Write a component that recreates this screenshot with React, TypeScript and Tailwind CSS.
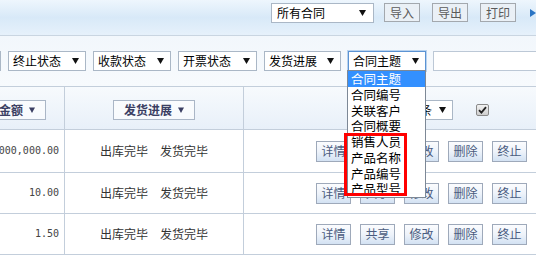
import React from "react";

const FONT = "font-['Noto_Sans_CJK_SC','Liberation_Sans',sans-serif]";

function Arrow() {
  return (
    <svg width="7" height="6" viewBox="0 0 7 6" className="shrink-0">
      <path d="M0 0 H7 L3.5 6 Z" fill="#111" />
    </svg>
  );
}

function Sel({ label, className, focus }: { label: string; className: string; focus?: boolean }) {
  return (
    <div
      className={
        "flex items-center justify-between h-[20px] bg-white pl-[4px] pr-[6px] shrink-0 text-[12px] leading-[14px] text-black border " +
        (focus ? "border-[#5b93d3] shadow-[0_0_0_1px_#b9d3ef] " : "border-[#aab7c6] ") +
        className
      }
    >
      <span className="whitespace-nowrap">{label}</span>
      <Arrow />
    </div>
  );
}

function TopBtn({ label }: { label: string }) {
  return (
    <div className="w-[36px] h-[19px] flex items-center justify-center border border-[#a3a8ae] bg-[#eaf0f6] text-[12px] leading-[14px] text-[#5a5a5a] shrink-0">
      {label}
    </div>
  );
}

function RowBtn({ label }: { label: string }) {
  return (
    <div className="w-[35px] h-[21px] flex items-center justify-center border border-[#9ea9ba] bg-gradient-to-b from-[#fbfcfe] via-[#eef3fa] to-[#d3e2f3] text-[12px] leading-[14px] text-[#4a5c80] shrink-0">
      {label}
    </div>
  );
}

function HeadBtn({ label }: { label: string }) {
  return (
    <div className="h-[20px] flex items-center gap-[6px] border border-[#aab6c6] bg-white/60 px-[10px] text-[12px] leading-[14px] font-bold text-[#3b3f63] shrink-0 whitespace-nowrap">
      <span>{label}</span>
      <svg width="6" height="6" viewBox="0 0 6 6">
        <path d="M0 0.5 H6 L3 6 Z" fill="#3b3f63" />
      </svg>
    </div>
  );
}

const rows = [
  { amt: "1,000,000.00", h: "h-[43px]" },
  { amt: "10.00", h: "h-[41px]" },
  { amt: "1.50", h: "h-[41px]" },
];

const items = ["合同主题", "合同编号", "关联客户", "合同概要", "销售人员", "产品名称", "产品编号", "产品型号"];

export default function App() {
  return (
    <div className={"relative w-[536px] h-[260px] overflow-hidden bg-white " + FONT}>
      {/* top bar */}
      <div className="h-[36px] border-b border-[#c9d5e1] bg-gradient-to-b from-[#eef6fd] via-[#d8e9f8] to-[#e6f1fb] flex items-start pt-[3px] pl-[271px]">
        <Sel label="所有合同" className="w-[103px] pl-[5px] pr-[7px]" />
        <div className="ml-[10px] flex gap-[12px]">
          <TopBtn label="导入" />
          <TopBtn label="导出" />
          <TopBtn label="打印" />
        </div>
        <svg width="6" height="8" viewBox="0 0 6 8" className="ml-[14px] mt-[6px]">
          <path d="M0 0 L6 4 L0 8 Z" fill="#2a74c4" />
        </svg>
      </div>

      {/* filter row */}
      <div className="h-[50px] bg-gradient-to-b from-[#f2f7fc] to-[#f7fafd] flex items-start pt-[15px]">
        <div className="flex gap-[7px] ml-[-77px]">
          <Sel label="合同状态" className="w-[78px]" />
          <Sel label="终止状态" className="w-[78px]" />
          <Sel label="收款状态" className="w-[78px]" />
          <Sel label="开票状态" className="w-[79px]" />
          <Sel label="发货进展" className="w-[77px]" />
          <Sel label="合同主题" className="w-[78px]" focus />
          <div className="w-[120px] h-[20px] bg-white border border-[#bcc8d6] shrink-0" />
        </div>
      </div>

      {/* table */}
      <div className="border-t border-[#c3cedb]">
        <div className="grid grid-cols-[65px_179px_1fr] h-[43px] border-b border-[#c3cedb] bg-gradient-to-b from-[#f7fafd] to-[#e8f0f9]">
          <div className="border-r border-[#c3cedb] flex items-center justify-end pr-[18px] pt-[4px] overflow-hidden">
            <HeadBtn label="合同金额" />
          </div>
          <div className="border-r border-[#c3cedb] flex items-center justify-center pt-[4px]">
            <HeadBtn label="发货进展" />
          </div>
          <div className="flex items-center justify-end pr-[47px] pt-[4px]">
            <Sel label="每页显示条" className="w-[86px]" />
            <div className="ml-[23px] w-[13px] h-[12px] rounded-[2px] border border-[#8a8a8a] bg-gradient-to-b from-[#f2f2f2] to-[#cfcfcf] flex items-center justify-center">
              <svg width="9" height="8" viewBox="0 0 9 8">
                <path d="M1 4.2 L3.4 6.6 L8 1.2" fill="none" stroke="#222" strokeWidth="1.8" />
              </svg>
            </div>
          </div>
        </div>
        {rows.map((r, i) => (
          <div key={i} className={"grid grid-cols-[65px_179px_1fr] border-b border-[#c3cedb] " + r.h}>
            <div className="border-r border-[#c3cedb] flex items-center justify-end pr-[5px] overflow-hidden">
              <span className="font-['DejaVu_Sans_Mono',monospace] text-[10px] leading-[12px] text-[#444] whitespace-nowrap">{r.amt}</span>
            </div>
            <div className="border-r border-[#c3cedb] flex items-center justify-center text-[12px] leading-[14px] text-[#333] whitespace-pre">
              出库完毕　发货完毕
            </div>
            <div className="flex items-center justify-end pr-[9px] gap-[9px]">
              <RowBtn label="详情" />
              <RowBtn label="共享" />
              <RowBtn label="修改" />
              <RowBtn label="删除" />
              <RowBtn label="终止" />
            </div>
          </div>
        ))}
      </div>

      {/* dropdown list */}
      <div className="absolute left-[347px] top-[70px] w-[79px] border border-[#7d8896] bg-white">
        {items.map((t, i) => (
          <div
            key={t}
            className={
              "h-[15.75px] pl-[3px] text-[12.5px] leading-[15.75px] whitespace-nowrap " +
              (i === 0 ? "bg-[#3390ff] text-white" : "text-black")
            }
          >
            {t}
          </div>
        ))}
      </div>

      {/* red annotation box */}
      <div className="absolute left-[344px] top-[133px] w-[63px] h-[63px] border-[3px] border-[#ff0000]" />
    </div>
  );
}
